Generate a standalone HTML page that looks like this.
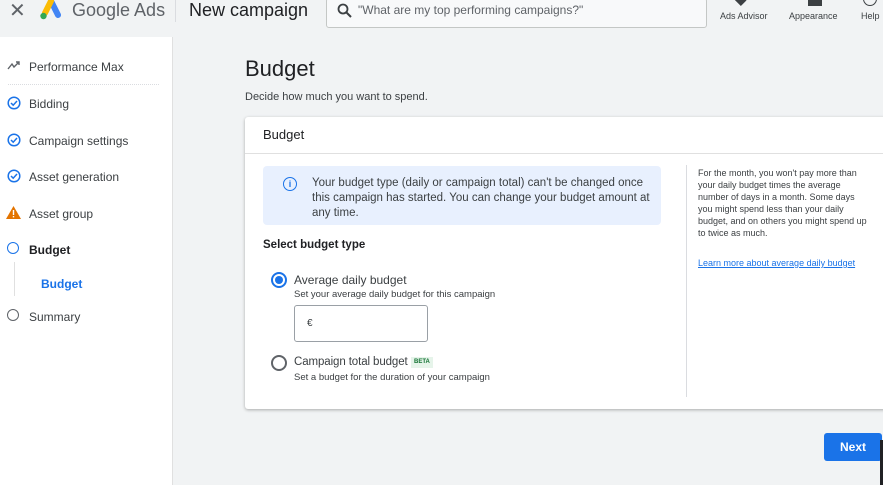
<!DOCTYPE html><html><head><style>
body{margin:0;width:883px;height:485px;overflow:hidden;background:#f1f3f4;font-family:"Liberation Sans",sans-serif;color:#3c4043;position:relative}
.a{position:absolute}
.side{left:0;top:37px;width:172px;height:448px;background:#fff;border-right:1px solid #e0e0e0}
.it{position:absolute;left:29px;font-size:12px;color:#3c4043}
.ck{position:absolute;left:7px;width:10px;height:10px;border:1.5px solid #1a73e8;border-radius:50%}
.card{left:245px;top:117px;width:645px;height:292px;background:#fff;box-shadow:0 1px 3px rgba(0,0,0,.3);border-radius:3px}
</style></head><body>
<div class="a" style="left:9px;top:-2px;font-size:20px;color:#5f6368">✕</div>
<svg class="a" style="left:38px;top:-1px" width="26" height="22" viewBox="0 0 26 22"><path d="M13 2 L20 16" stroke="#4285f4" stroke-width="6" stroke-linecap="round"/><path d="M13 2 L7 14" stroke="#fbbc04" stroke-width="6" stroke-linecap="round"/><circle cx="5.5" cy="17" r="3.2" fill="#34a853"/></svg>
<div class="a" style="left:72px;top:0px;font-size:18px;color:#5f6368">Google Ads</div>
<div class="a" style="left:175px;top:0;width:1px;height:22px;background:#dadce0"></div>
<div class="a" style="left:189px;top:0px;font-size:18px;color:#202124">New campaign</div>
<div class="a" style="left:326px;top:-2px;width:379px;height:28px;border:1px solid #c4c7c5;border-radius:3px;background:#f8f9fa"></div>
<svg class="a" style="left:337px;top:3px" width="15" height="15"><circle cx="6" cy="6" r="4.5" fill="none" stroke="#3c4043" stroke-width="1.8"/><path d="M9.5 9.5 L14 14" stroke="#3c4043" stroke-width="2"/></svg>
<div class="a" style="left:358px;top:3px;font-size:12px;color:#5f6368">"What are my top performing campaigns?"</div>
<div class="a" style="left:736px;top:-4px;width:9px;height:8px;background:#3c4043;transform:rotate(45deg)"></div>
<div class="a" style="left:808px;top:-2px;width:14px;height:8px;background:#3c4043"></div>
<div class="a" style="left:863px;top:-8px;width:12px;height:12px;border:1.5px solid #3c4043;border-radius:50%"></div>
<div class="a" style="left:720px;top:11px;font-size:9px;color:#3c4043">Ads Advisor</div>
<div class="a" style="left:789px;top:11px;font-size:9px;color:#3c4043">Appearance</div>
<div class="a" style="left:861px;top:11px;font-size:9px;color:#3c4043">Help</div>
<div class="a side"></div>
<svg class="a" style="left:7px;top:61px" width="13" height="9"><path d="M1 8 L5 3 L7 6 L12 1 M9 1 H12 V4" fill="none" stroke="#5f6368" stroke-width="1.4"/></svg>
<div class="it" style="top:60px">Performance Max</div>
<div class="a" style="left:8px;top:84px;width:151px;border-top:1px dotted #dadce0"></div>
<svg class="a" style="left:7px;top:96px" width="14" height="14"><circle cx="7" cy="7" r="5.8" fill="none" stroke="#1a73e8" stroke-width="1.5"/><path d="M4 7 L6.2 9.2 L10 5" fill="none" stroke="#1a73e8" stroke-width="1.5"/></svg><div class="it" style="top:97px">Bidding</div>
<svg class="a" style="left:7px;top:133px" width="14" height="14"><circle cx="7" cy="7" r="5.8" fill="none" stroke="#1a73e8" stroke-width="1.5"/><path d="M4 7 L6.2 9.2 L10 5" fill="none" stroke="#1a73e8" stroke-width="1.5"/></svg><div class="it" style="top:134px">Campaign settings</div>
<svg class="a" style="left:7px;top:169px" width="14" height="14"><circle cx="7" cy="7" r="5.8" fill="none" stroke="#1a73e8" stroke-width="1.5"/><path d="M4 7 L6.2 9.2 L10 5" fill="none" stroke="#1a73e8" stroke-width="1.5"/></svg><div class="it" style="top:170px">Asset generation</div>
<svg class="a" style="left:6px;top:206px" width="15" height="13"><path d="M7.5 0 L15 13 L0 13Z" fill="#e37400"/><rect x="6.8" y="4" width="1.4" height="5" fill="#fff"/><rect x="6.8" y="10" width="1.4" height="1.4" fill="#fff"/></svg>
<div class="it" style="top:207px">Asset group</div>
<div class="ck" style="top:242px;left:7px"></div><div class="it" style="top:243px;font-weight:bold;color:#202124">Budget</div>
<div class="a" style="left:14px;top:262px;width:1px;height:34px;background:#e0e0e0"></div>
<div class="it" style="top:277px;left:41px;font-weight:bold;color:#1a73e8">Budget</div>
<div class="ck" style="top:309px;border-color:#5f6368"></div><div class="it" style="top:310px">Summary</div>
<div class="a" style="left:245px;top:56px;font-size:22px;color:#202124">Budget</div>
<div class="a" style="left:245px;top:91px;font-size:11px">Decide how much you want to spend.</div>
<div class="a card"></div>
<div class="a" style="left:263px;top:127px;font-size:13px;color:#202124">Budget</div>
<div class="a" style="left:245px;top:153px;width:638px;height:1px;background:#e0e0e0"></div>
<div class="a" style="left:263px;top:166px;width:398px;height:59px;background:#e8f0fe;border-radius:4px"></div>
<div class="a" style="left:283px;top:177px;width:12px;height:12px;border:1.5px solid #1a73e8;border-radius:50%;font-size:9px;color:#1a73e8;text-align:center;line-height:12px;font-weight:bold">i</div>
<div class="a" style="left:312px;top:176px;width:345px;font-size:11.5px;line-height:15px;color:#3c4043">Your budget type (daily or campaign total) can't be changed once this campaign has started. You can change your budget amount at any time.</div>
<div class="a" style="left:263px;top:239px;font-size:11.5px;font-weight:bold;color:#202124">Select budget type</div>
<div class="a" style="left:271px;top:272px;width:12px;height:12px;border:2px solid #1a73e8;border-radius:50%"></div>
<div class="a" style="left:275px;top:276px;width:8px;height:8px;background:#1a73e8;border-radius:50%"></div>
<div class="a" style="left:294px;top:273px;font-size:12px">Average daily budget</div>
<div class="a" style="left:294px;top:289px;font-size:9.5px">Set your average daily budget for this campaign</div>
<div class="a" style="left:294px;top:305px;width:132px;height:35px;border:1px solid #9aa0a6;border-radius:3px"></div>
<div class="a" style="left:307px;top:318px;font-size:10px">€</div>
<div class="a" style="left:271px;top:355px;width:12px;height:12px;border:2px solid #5f6368;border-radius:50%"></div>
<div class="a" style="left:294px;top:356px;font-size:11.5px;letter-spacing:-0.1px">Campaign total budget</div>
<div class="a" style="left:411px;top:357px;font-size:6px;line-height:7px;background:#e6f4ea;color:#137333;padding:2px 3px;font-weight:bold">BETA</div>
<div class="a" style="left:294px;top:372px;font-size:9.5px">Set a budget for the duration of your campaign</div>
<div class="a" style="left:686px;top:165px;width:1px;height:232px;background:#dadce0"></div>
<div class="a" style="left:698px;top:167px;width:172px;font-size:9px;line-height:12px">For the month, you won't pay more than your daily budget times the average number of days in a month. Some days you might spend less than your daily budget, and on others you might spend up to twice as much.</div>
<div class="a" style="left:698px;top:258px;font-size:9px;color:#1a73e8;text-decoration:underline">Learn more about average daily budget</div>
<div class="a" style="left:824px;top:433px;width:58px;height:28px;background:#1a73e8;border-radius:3px;color:#fff;font-size:12px;font-weight:bold;text-align:center;line-height:28px">Next</div>
<div class="a" style="left:880px;top:440px;width:3px;height:45px;background:#202124"></div>
</body></html>
